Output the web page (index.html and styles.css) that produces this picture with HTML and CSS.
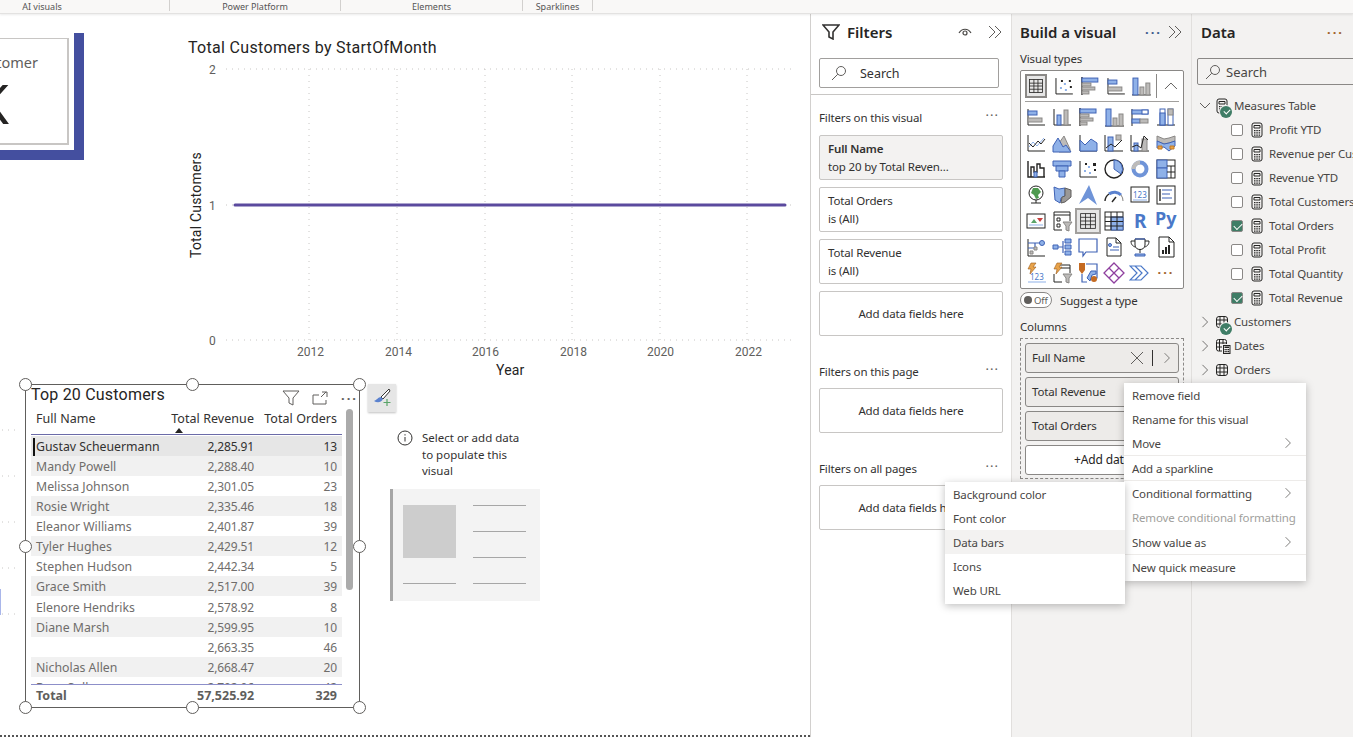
FILE: index.html
```html
<!DOCTYPE html>
<html lang="en">
  <head>
    <meta charset="UTF-8" />
    <title>Power BI Desktop - Report view</title>
    <link rel="stylesheet" href="styles.css">
  </head>
  <body>
    <svg class="defs" width="0" height="0">
      <symbol id="calc" viewBox="0 0 14 16">
        <rect class="k" x="2" y="1" width="10" height="14" rx="2"/>
        <path class="k" d="M4 3.5h6v2.5h-6z"/>
        <path class="dots" d="M4 8h1.500v1.300h-1.500zM6.300 8h1.500v1.300h-1.500zM8.600 8h1.500v1.300h-1.500zM4 10.200h1.500v1.300h-1.500zM6.300 10.200h1.500v1.300h-1.500zM8.600 10.200h1.500v1.300h-1.500zM4 12.400h1.500v1.300h-1.500zM6.300 12.400h1.500v1.300h-1.500zM8.600 12.400h1.500v1.300h-1.500z"/>
      </symbol>
      <symbol id="grid" viewBox="0 0 14 14">
        <rect class="k" x="1.500" y="1.500" width="11" height="11" rx="2.500"/>
        <path class="k" d="M5 1.500v11M9 1.500v11M1.500 5h11M1.500 9h11"/>
      </symbol>
      <symbol id="dates" viewBox="0 0 16 16">
        <path class="k" d="M7 13H3.500a2 2 0 0 1-2-2V3.500a2 2 0 0 1 2-2h6a2 2 0 0 1 2 2V6M4.500 1.500V13M8 1.500V6M1.500 5H11M1.500 9H7"/>
        <rect class="k" x="8.500" y="7.500" width="6.500" height="8"/>
        <path class="dots" d="M9.500 8.500h4.500v1.500H9.500zM9.500 11h1.300v1.300H9.500zM11.200 11h1.300v1.300h-1.300zM12.900 11h1.300v1.300h-1.300zM9.500 13h1.300v1.300H9.500zM11.200 13h1.300v1.300h-1.300zM12.900 13h1.300v1.300h-1.300z"/>
      </symbol>
      <symbol id="right" viewBox="0 0 10 14"><path class="thin" d="M2 1l6 6-6 6"/></symbol>
      <symbol id="double" viewBox="0 0 16 14"><path class="thin" d="M2 1l6 6-6 6M8 1l6 6-6 6"/></symbol>
      <symbol id="lens" viewBox="0 0 16 16"><circle class="thin" cx="10" cy="6" r="4.500"/><path class="thin" d="M6.800 9.200L1 15"/></symbol>
    </svg>

    <div class="ribbon">
      <div class="ribbon-group w1">AI visuals</div>
      <div class="ribbon-group w2">Power Platform</div>
      <div class="ribbon-group w3">Elements</div>
      <div class="ribbon-group w4">Sparklines</div>
    </div>

    <div class="app">
      <main class="canvas">
        <div class="kpi-shadow"></div>
        <div class="kpi-card">
          <div class="kpi-label">Total Customer</div>
          <div class="kpi-value">1K</div>
        </div>

        <svg class="line-chart" width="810" height="380" viewBox="0 14 810 380">
          <text class="chart-title" x="188" y="53">Total Customers by StartOfMonth</text>
          <path class="gridline" d="M226 69H795M226 205H795M226 340H795M309 69V340M397 69V340M485 69V340M572 69V340M660 69V340M747 69V340"/>
          <path class="series" d="M235 205H785"/>
          <text class="tick" x="209" y="74">2</text>
          <text class="tick" x="209" y="210">1</text>
          <text class="tick" x="209" y="345">0</text>
          <text class="tick" x="297" y="356">2012</text>
          <text class="tick" x="385" y="356">2014</text>
          <text class="tick" x="472" y="356">2016</text>
          <text class="tick" x="560" y="356">2018</text>
          <text class="tick" x="647" y="356">2020</text>
          <text class="tick" x="735" y="356">2022</text>
          <text class="axis-title" x="496" y="375">Year</text>
          <text class="axis-title" transform="translate(201 258) rotate(-90)">Total Customers</text>
        </svg>

        <svg class="left-peek" width="22" height="200" viewBox="0 0 22 200">
          <path class="gridline" d="M2 1H20M2 47H20M2 93H20M2 139H20M2 185H20"/>
          <path class="peek-bar" d="M.5 160V186"/>
        </svg>

        <section class="table-visual">
          <div class="table-title">Top 20 Customers</div>
          <div class="visual-tools">
            <svg width="18" height="16" viewBox="0 0 18 16"><path class="thin" d="M1 1h16l-6 7v7l-4-2V8z"/></svg>
            <svg width="16" height="14" viewBox="0 0 16 14"><path class="thin" d="M1 4V13H14V9M1 4h6M9 6l5-5M10 1h5v5"/></svg>
            <span class="more">···</span>
          </div>
          <div class="scrollbar"></div>
          <div class="table-head">
            <div class="cell">Full Name</div>
            <div class="cell num head-sorted">Total Revenue<span class="sort"></span></div>
            <div class="cell num">Total Orders</div>
          </div>
          <div class="table-body">
            <div class="row selected"><div class="cell">Gustav Scheuermann</div><div class="cell num">2,285.91</div><div class="cell num">13</div></div>
            <div class="row"><div class="cell">Mandy Powell</div><div class="cell num">2,288.40</div><div class="cell num">10</div></div>
            <div class="row"><div class="cell">Melissa Johnson</div><div class="cell num">2,301.05</div><div class="cell num">23</div></div>
            <div class="row"><div class="cell">Rosie Wright</div><div class="cell num">2,335.46</div><div class="cell num">18</div></div>
            <div class="row"><div class="cell">Eleanor Williams</div><div class="cell num">2,401.87</div><div class="cell num">39</div></div>
            <div class="row"><div class="cell">Tyler Hughes</div><div class="cell num">2,429.51</div><div class="cell num">12</div></div>
            <div class="row"><div class="cell">Stephen Hudson</div><div class="cell num">2,442.34</div><div class="cell num">5</div></div>
            <div class="row"><div class="cell">Grace Smith</div><div class="cell num">2,517.00</div><div class="cell num">39</div></div>
            <div class="row"><div class="cell">Elenore Hendriks</div><div class="cell num">2,578.92</div><div class="cell num">8</div></div>
            <div class="row"><div class="cell">Diane Marsh</div><div class="cell num">2,599.95</div><div class="cell num">10</div></div>
            <div class="row"><div class="cell"></div><div class="cell num">2,663.35</div><div class="cell num">46</div></div>
            <div class="row"><div class="cell">Nicholas Allen</div><div class="cell num">2,668.47</div><div class="cell num">20</div></div>
            <div class="row"><div class="cell">Ryan Sully</div><div class="cell num">2,702.06</div><div class="cell num">42</div></div>
          </div>
          <div class="table-total">
            <div class="cell">Total</div>
            <div class="cell num">57,525.92</div>
            <div class="cell num">329</div>
          </div>
          <span class="handle h-tl"></span><span class="handle h-tc"></span><span class="handle h-tr"></span>
          <span class="handle h-ml"></span><span class="handle h-mr"></span>
          <span class="handle h-bl"></span><span class="handle h-bc"></span><span class="handle h-br"></span>
        </section>

        <button class="format-btn" type="button">
          <svg width="20" height="20" viewBox="0 0 20 20">
            <path class="brush-tip" d="M17 1L9 9l2 2 7-8z"/>
            <path class="brush" d="M9 9c-3 0-4 3-7 4 3 2 7 2 9-2z"/>
            <path class="plus" d="M15 11v7M11.500 14.500h7"/>
          </svg>
        </button>

        <div class="placeholder">
          <div class="placeholder-msg">
            <svg class="info" width="16" height="16" viewBox="0 0 16 16">
              <circle cx="8" cy="8" r="7"/><path d="M8 7v4.500M8 4.200v1.300"/>
            </svg>
            <p>Select or add data to populate this visual</p>
          </div>
          <div class="placeholder-art">
            <div class="art-square"></div>
            <div class="art-line l1"></div>
            <div class="art-line l2"></div>
            <div class="art-line l3"></div>
            <div class="art-line l4"></div>
            <div class="art-line l5"></div>
          </div>
        </div>
      </main>

      <aside class="filters">
        <header class="pane-head">
          <svg class="funnel" width="18" height="16" viewBox="0 0 18 16"><path class="mid" d="M1 1h16l-6 7v7l-4-2V8z"/></svg>
          <h2>Filters</h2>
          <svg class="eye" width="16" height="12" viewBox="0 0 16 12"><path class="eye-line" d="M2 7c3-5 9-5 12 0"/><circle class="eye-line" cx="8" cy="7" r="2"/></svg>
          <svg class="collapse" width="16" height="14"><use href="#double"/></svg>
        </header>
        <div class="filter-search">
          <svg width="16" height="16"><use href="#lens"/></svg>
          <span>Search</span>
        </div>
        <div class="filter-sections">
          <div class="filter-title first">Filters on this visual<span class="more">···</span></div>
          <div class="filter-card active"><b>Full Name</b><span>top 20 by Total Reven...</span></div>
          <div class="filter-card"><span>Total Orders</span><span>is (All)</span></div>
          <div class="filter-card"><span>Total Revenue</span><span>is (All)</span></div>
          <div class="filter-card add">Add data fields here</div>
          <div class="filter-title page">Filters on this page<span class="more">···</span></div>
          <div class="filter-card add">Add data fields here</div>
          <div class="filter-title all">Filters on all pages<span class="more">···</span></div>
          <div class="filter-card add">Add data fields here</div>
        </div>
      </aside>

      <aside class="build">
        <header class="pane-head">
          <h2>Build a visual</h2>
          <span class="more blue">···</span>
          <svg class="collapse soft" width="16" height="14"><use href="#double"/></svg>
        </header>
        <div class="small-label types">Visual types</div>
        <div class="visual-types">
          <div class="vt-top">
            <svg class="vt picked" viewBox="0 0 22 22"><rect class="k" x="3" y="3" width="16" height="16"/><path class="k" d="M3 7.500h16M3 11h16M3 15h16M8.500 3v16M13.500 3v16"/></svg>
            <svg class="vt" viewBox="0 0 22 22"><path class="k" d="M3 3v16h17"/><path class="fb" d="M7 12h2v2H7zM11 8h2v2h-2zM12 14h2v2h-2z"/><path class="fk" d="M16 5h2v2h-2zM8 5h2v2H8zM17 11h2v2h-2z"/></svg>
            <svg class="vt" viewBox="0 0 22 22"><path class="ks" d="M3 2v18"/><rect class="b" x="3" y="3" width="16" height="4"/><rect class="g" x="3" y="8" width="9" height="3"/><rect class="g" x="3" y="12" width="13" height="3"/><rect class="g" x="3" y="16" width="7" height="3"/></svg>
            <svg class="vt" viewBox="0 0 22 22"><path class="k" d="M3 3v16h17"/><rect class="b" x="3" y="5" width="9" height="4"/><rect class="g" x="3" y="12" width="14" height="4"/></svg>
            <svg class="vt" viewBox="0 0 22 22"><path class="k" d="M2 20h19"/><rect class="b" x="3" y="3" width="5" height="17"/><rect class="g" x="10" y="12" width="4" height="8"/><rect class="g" x="16" y="8" width="4" height="12"/></svg>
            <span class="vt-divider"></span>
            <svg class="vt-up" width="16" height="10" viewBox="0 0 16 10"><path d="M2 8l6-6 6 6"/></svg>
          </div>
          <div class="vt-grid">
            <svg class="vt" viewBox="0 0 22 22"><path class="k" d="M3 3v16h17"/><rect class="b" x="3" y="5" width="9" height="4"/><rect class="g" x="3" y="12" width="14" height="4"/></svg>
            <svg class="vt" viewBox="0 0 22 22"><path class="k" d="M3 3v16h17"/><rect class="b" x="6" y="9" width="4" height="10"/><rect class="g" x="13" y="4" width="4" height="15"/></svg>
            <svg class="vt" viewBox="0 0 22 22"><path class="ks" d="M3 2v18"/><rect class="b" x="3" y="3" width="16" height="4"/><rect class="g" x="3" y="8" width="9" height="3"/><rect class="g" x="3" y="12" width="13" height="3"/><rect class="g" x="3" y="16" width="7" height="3"/></svg>
            <svg class="vt" viewBox="0 0 22 22"><path class="k" d="M2 20h19"/><rect class="b" x="3" y="3" width="5" height="17"/><rect class="g" x="10" y="12" width="4" height="8"/><rect class="g" x="16" y="8" width="4" height="12"/></svg>
            <svg class="vt" viewBox="0 0 22 22"><path class="k" d="M3 3v17"/><rect class="b" x="3" y="4" width="16" height="4"/><rect class="o" x="13" y="4" width="6" height="4"/><rect class="b" x="3" y="13" width="8" height="4"/><rect class="g" x="11" y="13" width="8" height="4"/></svg>
            <svg class="vt" viewBox="0 0 22 22"><path class="k" d="M2 19h18"/><rect class="o" x="5" y="3" width="5" height="16"/><rect class="b" x="5" y="7" width="5" height="12"/><rect class="o" x="13" y="3" width="5" height="16"/><rect class="g" x="13" y="3" width="5" height="6"/></svg>

            <svg class="vt" viewBox="0 0 22 22"><path class="k" d="M3 3v16h17"/><path class="ln" d="M4 15l4-5 4 4 7-8"/><path class="k" d="M4 11l4 4 5-6 3 3 4-5"/></svg>
            <svg class="vt" viewBox="0 0 22 22"><path class="g" d="M8 11l5-7 6 13v3H8z"/><path class="b" d="M2 20v-6l5-8 5 9 3-2 5 7z"/></svg>
            <svg class="vt" viewBox="0 0 22 22"><path class="k" d="M3 3v16h17"/><path class="b" d="M3 8l5 5 6-6 6 4v8H3z"/></svg>
            <svg class="vt" viewBox="0 0 22 22"><path class="k" d="M2 19h18M2 3v16"/><rect class="b" x="5" y="5" width="5" height="14"/><rect class="g" x="13" y="3" width="5" height="5"/><path class="k" d="M3 16l5-4 4 3 7-7"/></svg>
            <svg class="vt" viewBox="0 0 22 22"><path class="k" d="M2 19h18M2 3v16"/><rect class="b" x="5" y="11" width="4" height="8"/><rect class="g" x="13" y="7" width="5" height="12"/><path class="k" d="M3 15l5-2 4 3 3-12 4 4"/></svg>
            <svg class="vt" viewBox="0 0 22 22"><path class="g" d="M2 4l7 3 5-1 6-2v5l-6 2-5 1-7-3z"/><path class="b" d="M2 9l7 3 5-1 6-2v5l-6 5-5-4-7 1z"/><path class="or" d="M3 14h4v3H3zM15 14h4v3h-4z"/></svg>

            <svg class="vt" viewBox="0 0 22 22"><path class="ks" d="M3 3v16h17"/><path class="ks" d="M6 19V9h3v5h3V6h3v4h4v9"/><path class="b" d="M9 14h3v5H9z"/></svg>
            <svg class="vt" viewBox="0 0 22 22"><path class="b" d="M2 3h18v5H2z"/><path class="b" d="M5 8h12v5H5z"/><path class="b" d="M8 13h6v6H8z"/></svg>
            <svg class="vt" viewBox="0 0 22 22"><path class="k" d="M3 3v16h17"/><path class="fb" d="M7 12h2v2H7zM11 8h2v2h-2zM12 14h2v2h-2z"/><path class="fk" d="M16 5h3v3h-3zM8 5h2v2H8zM17 11h2v2h-2z"/></svg>
            <svg class="vt" viewBox="0 0 22 22"><circle class="ks" cx="11" cy="11" r="9"/><path class="b" d="M11 2a9 9 0 0 1 7 14l-7-5z"/></svg>
            <svg class="vt" viewBox="0 0 22 22"><circle class="ring" cx="11" cy="11" r="6.500"/><path class="ring-g" d="M4.500 11a6.500 6.500 0 0 1 6.500-6.500"/></svg>
            <svg class="vt" viewBox="0 0 22 22"><rect class="k" x="2" y="2" width="18" height="18"/><rect class="b" x="2" y="2" width="10" height="8"/><rect class="b" x="2" y="10" width="10" height="10"/><path class="k" d="M12 8h8M16 8v12M12 14h8"/></svg>

            <svg class="vt" viewBox="0 0 22 22"><circle class="k" cx="11" cy="9" r="7"/><path class="earth" d="M8 4l5 0 3 4-3 3 1 3-3 1-2-4-3-2z"/><path class="k" d="M6 19h10M11 16v3"/></svg>
            <svg class="vt" viewBox="0 0 22 22"><path class="b" d="M3 3l5 2 6-1v9l-4 1-1 5-5-3z"/><path class="dk" d="M14 4l6 2v7l-6 5-4 1 1-6 3-1z"/></svg>
            <svg class="vt" viewBox="0 0 22 22"><path class="azure" d="M12 1l8 20-9-7-9 6z"/></svg>
            <svg class="vt" viewBox="0 0 22 22"><path class="ks" d="M2 17a9 9 0 0 1 4-7"/><path class="gauge" d="M6 10a9 9 0 0 1 12 1"/><path class="g" d="M18 11a9 9 0 0 1 2 6"/><path class="ks" d="M9 18l4-5"/></svg>
            <svg class="vt" viewBox="0 0 22 22"><rect class="k" x="2" y="3" width="18" height="15"/><text class="vt-num" x="4" y="14">123</text><path class="ln" d="M4 16h14"/></svg>
            <svg class="vt" viewBox="0 0 22 22"><rect class="k" x="2" y="2" width="18" height="18"/><path class="ks" d="M5 5v12"/><path class="ln2" d="M7 6h10M7 10h8M7 14h10"/></svg>

            <svg class="vt" viewBox="0 0 22 22"><rect class="k" x="2" y="4" width="18" height="14"/><path class="up" d="M6 13l3-4 3 4z"/><path class="down" d="M12 8h6l-3 4z"/><path class="ln" d="M4 15h14"/></svg>
            <svg class="vt" viewBox="0 0 22 22"><path class="k" d="M19 11V2H3v18h8M3 5h16"/><path class="g" d="M12 12h9l-3 4v5l-3-1v-4z"/><path class="k" d="M6 8h3v3H6zM6 14h3v3H6z"/></svg>
            <svg class="vt framed" viewBox="0 0 22 22"><rect class="k" x="2" y="2" width="18" height="18"/><path class="k" d="M2 6.500h18M2 11h18M2 15.500h18M8 2v18M14 2v18"/></svg>
            <svg class="vt" viewBox="0 0 22 22"><rect class="k" x="2" y="2" width="18" height="18"/><path class="b" d="M8 7h12v13H8z"/><path class="k" d="M2 7h18M2 11.500h18M2 16h18M8 2v18M14 2v18"/></svg>
            <svg class="vt" viewBox="0 0 22 22"><text class="vt-r" x="5" y="18">R</text></svg>
            <svg class="vt" viewBox="0 0 22 22"><text class="vt-py" x="0" y="15">Py</text></svg>

            <svg class="vt" viewBox="0 0 22 22"><path class="k" d="M3 3v17h17"/><path class="ln2" d="M3 7h13M10 7v5H3"/><circle class="b" cx="17" cy="7" r="2.500"/><path class="g" d="M9 11h3v3H9zM5 15h3v3H5z"/></svg>
            <svg class="vt" viewBox="0 0 22 22"><path class="ln2" d="M7 11h5M12 5v12"/><path class="b" d="M2 9h5v4H2zM14 3h6v4h-6zM14 9h6v4h-6zM14 15h6v4h-6z"/></svg>
            <svg class="vt" viewBox="0 0 22 22"><path class="ln2" d="M2 3h18v13H9l-3 4v-4H2z"/></svg>
            <svg class="vt" viewBox="0 0 22 22"><path class="k" d="M4 2h9l5 5v13H4zM13 2v5h5"/><circle class="b" cx="7" cy="9" r="1.500"/><path class="ln2" d="M10 11h6M7 14h9"/></svg>
            <svg class="vt" viewBox="0 0 22 22"><path class="k" d="M6 3h10v6c0 6-10 6-10 0zM6 5H2c0 4 2 5 4 6M16 5h4c0 4-2 5-4 6M11 13v4"/><path class="b" d="M6 18h10v2H6z"/><path class="ln2" d="M6 3h10"/></svg>
            <svg class="vt" viewBox="0 0 22 22"><path class="k" d="M4 1h10l5 5v15H4zM14 1v5h5"/><path class="fk" d="M7 14h2v4H7zM10 11h2v7h-2zM13 9h2v9h-2z"/></svg>

            <svg class="vt" viewBox="0 0 22 22"><path class="bolt" d="M6 1h5L8 5h3L5 12l1-5H3z"/><text class="vt-num" x="5" y="18">123</text><path class="ln" d="M3 20h18"/></svg>
            <svg class="vt" viewBox="0 0 22 22"><path class="k" d="M19 11V3H9M3 12v8h8M9 6h10"/><path class="bolt" d="M6 1h5L8 5h3L5 12l1-5H3z"/><path class="g" d="M12 12h9l-3 4v5l-3-1v-4z"/></svg>
            <svg class="vt" viewBox="0 0 22 22"><path class="ln2" d="M9 2h11v14h-6M5 12v8h5"/><path class="orf" d="M2 1h6v7l-3 4-3-4z"/><path class="b" d="M10 16l4-7h5v3l-4 1-2 6z"/><circle class="orf" cx="17" cy="17" r="3"/></svg>
            <svg class="vt" viewBox="0 0 22 22"><path class="pa" d="M11 1l10 10-10 10L1 11zM6 6l10 10M16 6L6 16"/></svg>
            <svg class="vt" viewBox="0 0 22 22"><path class="auto" d="M1 4h11l7 7-7 7H1l7-7zM6 4l7 7-7 7"/></svg>
            <span class="vt-more">···</span>
          </div>
        </div>
        <div class="suggest">
          <span class="toggle"><i></i>Off</span>
          <span>Suggest a type</span>
        </div>
        <div class="small-label columns">Columns</div>
        <div class="well">
          <div class="chip"><span>Full Name</span>
            <svg class="chip-x" width="14" height="14" viewBox="0 0 14 14"><path class="thin" d="M1 1l12 12M13 1L1 13"/></svg>
            <i class="chip-sep"></i>
            <svg width="8" height="12"><use href="#right"/></svg>
          </div>
          <div class="chip"><span>Total Revenue</span></div>
          <div class="chip"><span>Total Orders</span></div>
          <div class="chip add">+Add data</div>
        </div>
      </aside>

      <aside class="data">
        <header class="pane-head"><h2>Data</h2><span class="more data-more">···</span></header>
        <div class="data-search">
          <svg width="16" height="16"><use href="#lens"/></svg><span>Search</span>
        </div>
        <ul class="tree">
          <li class="table-row">
            <svg class="twisty" width="12" height="8" viewBox="0 0 12 8"><path class="thin" d="M1 1l5 5 5-5"/></svg>
            <span class="table-icon"><svg width="14" height="16"><use href="#calc"/></svg><i class="badge"></i></span>Measures Table
          </li>
          <li class="field"><i class="check"></i><svg width="14" height="16"><use href="#calc"/></svg>Profit YTD</li>
          <li class="field"><i class="check"></i><svg width="14" height="16"><use href="#calc"/></svg>Revenue per Customer</li>
          <li class="field"><i class="check"></i><svg width="14" height="16"><use href="#calc"/></svg>Revenue YTD</li>
          <li class="field"><i class="check"></i><svg width="14" height="16"><use href="#calc"/></svg>Total Customers</li>
          <li class="field"><i class="check on"></i><svg width="14" height="16"><use href="#calc"/></svg>Total Orders</li>
          <li class="field"><i class="check"></i><svg width="14" height="16"><use href="#calc"/></svg>Total Profit</li>
          <li class="field"><i class="check"></i><svg width="14" height="16"><use href="#calc"/></svg>Total Quantity</li>
          <li class="field"><i class="check on"></i><svg width="14" height="16"><use href="#calc"/></svg>Total Revenue</li>
          <li class="table-row">
            <svg class="twisty side" width="8" height="12"><use href="#right"/></svg>
            <span class="table-icon"><svg width="14" height="14"><use href="#grid"/></svg><i class="badge"></i></span>Customers
          </li>
          <li class="table-row">
            <svg class="twisty side" width="8" height="12"><use href="#right"/></svg>
            <span class="table-icon"><svg width="16" height="16"><use href="#dates"/></svg></span>Dates
          </li>
          <li class="table-row">
            <svg class="twisty side" width="8" height="12"><use href="#right"/></svg>
            <span class="table-icon"><svg width="14" height="14"><use href="#grid"/></svg></span>Orders
          </li>
        </ul>
      </aside>

      <div class="menu field-menu">
        <div class="menu-item">Remove field</div>
        <div class="menu-item">Rename for this visual</div>
        <div class="menu-item sep">Move<svg width="8" height="12"><use href="#right"/></svg></div>
        <div class="menu-item sep">Add a sparkline</div>
        <div class="menu-item">Conditional formatting<svg width="8" height="12"><use href="#right"/></svg></div>
        <div class="menu-item off">Remove conditional formatting</div>
        <div class="menu-item sep">Show value as<svg width="8" height="12"><use href="#right"/></svg></div>
        <div class="menu-item">New quick measure</div>
      </div>

      <div class="menu format-menu">
        <div class="menu-item">Background color</div>
        <div class="menu-item">Font color</div>
        <div class="menu-item hover">Data bars</div>
        <div class="menu-item">Icons</div>
        <div class="menu-item">Web URL</div>
      </div>
    </div>
  </body>
</html>
```

FILE: styles.css
```css
* {
  box-sizing: border-box;
}
html,
body {
  margin: 0;
  height: 100%;
  overflow: hidden;
}
body {
  font-family: "Noto Sans", "Open Sans", sans-serif;
  font-size: 11.5px;
  letter-spacing: -0.15px;
  color: #323130;
  background: #fff;
}
h2 {
  margin: 0;
  font-size: 15px;
  font-weight: 600;
  letter-spacing: 0;
  color: #252423;
}
p {
  margin: 0;
}
ul {
  list-style: none;
  margin: 0;
  padding: 0;
}
.defs {
  position: absolute;
}

/* svg helpers */
.k,
.thin,
.mid,
.ks,
.ln,
.ln2,
.eye-line {
  fill: none;
}
.k,
.ks {
  stroke: #252423;
}
.k {
  stroke-width: 1;
}
.ks {
  stroke-width: 1.4;
}
.thin {
  stroke: #605e5c;
  stroke-width: 1;
}
.mid {
  stroke: #323130;
  stroke-width: 1.6;
}
.eye-line {
  stroke: #484644;
  stroke-width: 1.2;
}
.dots,
.fk {
  fill: #252423;
}
.fb {
  fill: #8fb1e8;
}
.b {
  fill: #8fb1e8;
  stroke: #3f62b5;
}
.g {
  fill: #bdbbb9;
  stroke: #8a8886;
}
.o {
  fill: #fff;
  stroke: #3f62b5;
}
.or {
  fill: #e8a34a;
  stroke: #c47a22;
}
.orf {
  fill: #c46a22;
}
.dk {
  fill: #9a9896;
  stroke: #605e5c;
}
.ln {
  stroke: #8fb1e8;
}
.ln2 {
  stroke: #3f62b5;
  stroke-width: 1.2;
}
.ring {
  fill: none;
  stroke: #6f94d8;
  stroke-width: 4;
}
.ring-g {
  fill: none;
  stroke: #bdbbb9;
  stroke-width: 4;
}
.earth {
  fill: #4f9a4f;
}
.azure {
  fill: #6f94d8;
}
.gauge {
  fill: none;
  stroke: #5b82cf;
  stroke-width: 3;
}
.up {
  fill: #5aa469;
}
.down {
  fill: #c8403f;
}
.bolt {
  fill: #e8a34a;
  stroke: #9a5b1a;
  stroke-width: 0.6;
}
.pa {
  fill: none;
  stroke: #8e3f9e;
  stroke-width: 1.3;
}
.auto {
  fill: none;
  stroke: #4a78c8;
  stroke-width: 1.2;
}
.vt-num {
  font-size: 8px;
  letter-spacing: 0;
  fill: #4a78c8;
}
.vt-r {
  font-size: 19px;
  font-weight: 700;
  letter-spacing: 0;
  fill: #4a78c8;
}
.vt-py {
  font-size: 18px;
  font-weight: 700;
  letter-spacing: 0;
  fill: #4a78c8;
}

/* ribbon */
.ribbon {
  display: flex;
  height: 14px;
  background: #f9f8f7;
  border-bottom: 1px solid #e3e2e1;
  box-shadow: 0 1px 2px rgba(0, 0, 0, 0.08);
  font-size: 9px;
  letter-spacing: 0;
  color: #555;
  position: relative;
  z-index: 2;
}
.ribbon-group {
  text-align: center;
  border-right: 1px solid #d2d0ce;
  height: 11px;
  line-height: 14px;
}
.w1 {
  width: 170px;
  padding-right: 85px;
}
.w2 {
  width: 171px;
}
.w3 {
  width: 182px;
}
.w4 {
  width: 70px;
}

/* layout */
.app {
  position: relative;
  display: flex;
  height: 723px;
}
.canvas {
  position: relative;
  width: 811px;
  height: 723px;
  border-right: 1px solid #d2d0ce;
  overflow: hidden;
}
.canvas::after {
  content: "";
  position: absolute;
  left: 0;
  right: 0;
  top: 721px;
  border-top: 2px dotted #555;
}
.filters {
  width: 201px;
  background: #fff;
  border-right: 1px solid #e1dfdd;
}
.build {
  width: 180px;
  background: #f3f2f1;
  border-right: 1px solid #e1dfdd;
  padding: 0 8px;
}
.data {
  flex: 1;
  background: #f3f2f1;
  overflow: hidden;
}
.pane-head {
  display: flex;
  align-items: center;
  height: 36px;
}
.more {
  color: #323130;
  font-size: 13px;
  font-weight: 700;
  letter-spacing: 2px;
  line-height: 1;
}
.collapse {
  flex: none;
}

/* canvas visuals */
.kpi-shadow {
  position: absolute;
  left: -20px;
  top: 19px;
  width: 104px;
  height: 127px;
  background: #444f9f;
}
.kpi-card {
  position: absolute;
  left: -70px;
  top: 24px;
  width: 139px;
  height: 107px;
  background: #fff;
  border: 1px solid #c8c6c4;
  border-width: 1px 2px 2px 1px;
  box-shadow: 0 0 0 5px #fff;
  overflow: hidden;
  text-align: right;
}
.kpi-label {
  margin-top: 13px;
  padding-right: 29px;
  font-size: 14.500px;
  letter-spacing: 0;
  color: #605e5c;
  white-space: nowrap;
}
.kpi-value {
  font-size: 54px;
  line-height: 62px;
  letter-spacing: 0;
  color: #252423;
  padding-right: 58px;
}
.line-chart {
  position: absolute;
  left: 0;
  top: 0;
}
.chart-title {
  font-family: Roboto, sans-serif;
  font-size: 16px;
  letter-spacing: 0.32px;
  fill: #252423;
}
.gridline {
  fill: none;
  stroke: #c8c6c4;
  stroke-dasharray: 1 5;
}
.series {
  stroke: #5b4a9e;
  stroke-width: 3;
  stroke-linecap: round;
}
.tick {
  font-family: Roboto, sans-serif;
  font-size: 12px;
  letter-spacing: 0;
  fill: #605e5c;
}
.axis-title {
  font-family: Roboto, sans-serif;
  font-size: 14px;
  letter-spacing: 0.2px;
  fill: #252423;
}
.left-peek {
  position: absolute;
  left: 0;
  top: 415px;
}
.peek-bar {
  stroke: #a9b6ea;
  stroke-width: 1;
}

/* table visual */
.table-visual {
  position: absolute;
  left: 25px;
  top: 370px;
  width: 335px;
  height: 324px;
  border: 1px solid #605e5c;
  padding: 0 17px 0 5px;
  background: #fff;
}
.table-title {
  font-family: Roboto, sans-serif;
  font-size: 16px;
  letter-spacing: 0.2px;
  line-height: 20px;
  color: #252423;
}
.visual-tools {
  position: absolute;
  top: 5px;
  left: 256px;
  display: flex;
  align-items: center;
  gap: 12px;
}
.visual-tools .more {
  margin-left: 1px;
  color: #605e5c;
}
.scrollbar {
  position: absolute;
  left: 320px;
  top: 24px;
  width: 7px;
  height: 181px;
  border-radius: 4px;
  background: #ababab;
}
.table-head,
.row,
.table-total {
  display: grid;
  grid-template-columns: 166px 62px 83px;
}
.cell {
  padding: 0 5px;
  white-space: nowrap;
}
.num {
  text-align: right;
  padding-left: 0;
}
.table-head {
  height: 29px;
  padding-top: 4px;
  border-bottom: 1px solid #6b6ba8;
  color: #323130;
  font-size: 12.500px;
  letter-spacing: 0.05px;
  line-height: 17px;
  margin-top: 1px;
}
.head-sorted {
  position: relative;
  overflow: visible;
  direction: rtl;
}
.sort {
  position: absolute;
  left: -22px;
  top: 18px;
  border: 4px solid transparent;
  border-top: 0;
  border-bottom: 5px solid #252423;
}
.table-body {
  height: 249px;
  overflow: hidden;
  border-bottom: 1px solid #8d8fc9;
  margin-top: 1px;
}
.row {
  height: 20px;
  line-height: 21px;
  color: #6f6d6b;
  font-size: 12.300px;
  letter-spacing: 0;
}
.row .num {
  font-size: 12px;
  letter-spacing: -0.15px;
}
.row:nth-child(even) {
  background: #f1f1f1;
}
.row:nth-child(9) {
  margin-top: 1px;
}
.row.selected {
  position: relative;
  background: #e6e6e6;
  color: #323130;
}
.row.selected::before {
  content: "";
  position: absolute;
  left: 2px;
  top: 2px;
  bottom: 0;
  width: 2px;
  background: #111;
}
.table-total {
  height: 22px;
  line-height: 22px;
  font-weight: 700;
  color: #605e5c;
  font-size: 12.500px;
  letter-spacing: 0;
}
.handle {
  position: absolute;
  width: 13px;
  height: 13px;
  border-radius: 50%;
  border: 1px solid #605e5c;
  background: #fff;
}
.h-tl,
.h-tc,
.h-tr {
  top: -7px;
}
.h-ml,
.h-mr {
  top: 155px;
}
.h-bl,
.h-bc,
.h-br {
  bottom: -7px;
}
.h-tl,
.h-ml,
.h-bl {
  left: -7px;
}
.h-tc,
.h-bc {
  left: 160px;
}
.h-tr,
.h-mr,
.h-br {
  right: -7px;
}
.format-btn {
  position: absolute;
  left: 368px;
  top: 370px;
  width: 28px;
  height: 28px;
  padding: 4px;
  border: 0;
  background: #e6e6e6;
  box-shadow: 0 1px 2px rgba(0, 0, 0, 0.25);
}
.brush-tip {
  fill: #fff;
  stroke: #323130;
}
.brush {
  fill: #5b82cf;
}
.plus {
  fill: none;
  stroke: #5aa469;
  stroke-width: 1.200;
}

/* empty placeholder */
.placeholder {
  position: absolute;
  left: 390px;
  top: 416px;
  width: 150px;
}
.placeholder-msg {
  display: flex;
  gap: 9px;
  padding-left: 7px;
  color: #323130;
  line-height: 16.500px;
  letter-spacing: 0;
}
.placeholder-msg p {
  width: 110px;
}
.info {
  flex: none;
  fill: none;
  stroke: #323130;
}
.placeholder-art {
  position: relative;
  height: 112px;
  margin-top: 9px;
  background: #f3f3f3;
  border-left: 3px solid #a6a6a6;
}
.art-square {
  position: absolute;
  left: 10px;
  top: 16px;
  width: 53px;
  height: 53px;
  background: #cdcdcd;
}
.art-line {
  position: absolute;
  width: 53px;
  height: 1px;
  background: #a6a6a6;
}
.l1 {
  left: 80px;
  top: 16px;
}
.l2 {
  left: 80px;
  top: 42px;
}
.l3 {
  left: 80px;
  top: 68px;
}
.l4 {
  left: 80px;
  top: 94px;
}
.l5 {
  left: 10px;
  top: 94px;
}

/* filters pane */
.filters .pane-head {
  padding: 0 8px 0 11px;
}
.filters h2 {
  margin-left: 7px;
  flex: 1;
}
.eye {
  margin-right: 14px;
}
.filter-search {
  display: flex;
  align-items: center;
  gap: 13px;
  width: 180px;
  height: 30px;
  margin: 8px 0 6px 8px;
  padding-left: 11px;
  background: #fff;
  border: 1px solid #a19f9d;
  border-radius: 2px;
  font-size: 12.500px;
  letter-spacing: 0;
}
.filter-sections {
  border-top: 1px solid #c8c6c4;
  padding: 0 8px;
}
.filter-title {
  display: flex;
  justify-content: space-between;
  color: #323130;
  height: 17px;
  line-height: 17px;
}
.filter-title .more {
  margin-right: 4px;
  font-weight: 400;
  letter-spacing: 1px;
  color: #605e5c;
}
.first {
  margin-top: 14px;
  margin-bottom: 9px;
}
.page {
  margin-top: 27px;
  margin-bottom: 8px;
}
.all {
  margin-top: 27px;
  margin-bottom: 8px;
}
.filter-card {
  display: flex;
  flex-direction: column;
  justify-content: center;
  width: 184px;
  height: 45px;
  margin-bottom: 7px;
  padding: 0 8px;
  border: 1px solid #c8c6c4;
  border-radius: 2px;
  line-height: 18px;
  color: #323130;
  background: #fff;
}
.filter-card b {
  font-weight: 600;
}
.filter-card.active {
  background: #f3f2f1;
}
.filter-card.add {
  align-items: center;
  padding-top: 1px;
}

/* build pane */
.build .pane-head {
  padding-right: 0;
}
.build h2 {
  flex: 1;
}
.more.blue {
  color: #3a5a8c;
  margin-right: 5px;
}
.small-label {
  color: #323130;
  height: 17px;
  line-height: 17px;
}
.visual-types {
  width: 164px;
  height: 219px;
  margin-top: 3px;
  background: #fff;
  border: 1px solid #8a8886;
  border-radius: 2px;
  padding: 0 2px;
}
.vt {
  display: block;
  width: 22px;
  height: 22px;
  margin: 2px;
}
.vt.framed {
  width: 26px;
  height: 26px;
  margin: 0;
  padding: 2px;
  background: #e6e6e6;
  border: 2px solid #a19f9d;
}
.vt-top {
  display: flex;
  align-items: center;
  height: 31px;
  margin: 0 2px;
  border-bottom: 1px solid #a19f9d;
  gap: 0;
}
.vt-top .vt {
  margin: 0 2px;
}
.vt-top .vt.picked {
  width: 22px;
  height: 24px;
  background: #e6e6e6;
  border: 2px solid #8a8886;
  margin-left: 0;
  margin-right: 4px;
}
.vt-divider {
  width: 1px;
  height: 24px;
  background: #8a8886;
  margin-left: 2px;
}
.vt-up {
  margin-left: 6px;
}
.vt-up path {
  fill: none;
  stroke: #605e5c;
}
.vt-grid {
  display: grid;
  grid-template-columns: repeat(6, 26px);
  grid-auto-rows: 26px;
  margin-top: 2px;
}
.vt-more {
  text-align: center;
  font-size: 13px;
  font-weight: 700;
  letter-spacing: 2px;
  line-height: 24px;
  color: #a0622a;
}
.suggest {
  display: flex;
  align-items: center;
  gap: 8px;
  height: 16px;
  margin-top: 3px;
  color: #323130;
}
.toggle {
  display: flex;
  align-items: center;
  gap: 2px;
  width: 32px;
  height: 16px;
  padding-left: 3px;
  border: 1px solid #8a8886;
  border-radius: 8px;
  font-size: 9.500px;
  background: #fff;
  color: #605e5c;
}
.toggle i {
  width: 8px;
  height: 8px;
  border-radius: 50%;
  background: #605e5c;
}
.columns {
  margin-top: 10px;
}
.well {
  display: flex;
  flex-direction: column;
  gap: 4px;
  width: 164px;
  height: 141px;
  margin-top: 3px;
  padding: 4px;
  border: 1px dashed #8a8886;
}
.chip {
  display: flex;
  align-items: center;
  height: 30px;
  flex: none;
  padding: 0 7px 1px 6px;
  background: #edebe9;
  border: 1px solid #8a8886;
  border-radius: 3px;
  color: #323130;
}
.chip span {
  flex: 1;
}
.chip-x {
  margin-right: 8px;
}
.chip-sep {
  width: 1px;
  height: 16px;
  background: #323130;
  margin-right: 10px;
}
.chip.add {
  background: #fff;
  color: #252423;
  padding-left: 48px;
  font-size: 12px;
}

/* data pane */
.data .pane-head {
  padding: 0 9px;
}
.data h2 {
  flex: 1;
}
.data-more {
  color: #a0622a;
}
.data-search {
  display: flex;
  align-items: center;
  gap: 5px;
  width: 170px;
  height: 27px;
  margin: 8px 0 9px 5px;
  padding-left: 7px;
  background: #f3f2f1;
  border: 1px solid #8a8886;
  border-radius: 2px;
  font-size: 13px;
  letter-spacing: 0;
  color: #484644;
}
.tree {
  width: 161px;
  white-space: nowrap;
  color: #484644;
}
.tree li {
  display: flex;
  align-items: center;
  height: 24px;
  padding-bottom: 1px;
}
.twisty {
  flex: none;
  width: 12px;
  margin-left: 7px;
}
.table-icon {
  position: relative;
  display: flex;
  flex: none;
  width: 19px;
  margin-left: 4px;
}
.badge {
  position: absolute;
  left: 5px;
  top: 8px;
  width: 12px;
  height: 12px;
  border-radius: 50%;
  background: #3f7d66;
  box-shadow: 0 0 0 1px #f3f2f1;
}
.badge::after {
  content: "";
  position: absolute;
  left: 3.500px;
  top: 3px;
  width: 5px;
  height: 3px;
  border-left: 1px solid #fff;
  border-bottom: 1px solid #fff;
  transform: rotate(-45deg);
}
.field {
  padding-left: 39px;
  gap: 5px;
}
.field svg {
  flex: none;
  margin-left: 1px;
}
.check {
  flex: none;
  position: relative;
  width: 12px;
  height: 12px;
  margin-right: 1px;
  background: #fff;
  border: 1px solid #8a8886;
  border-radius: 2px;
}
.check.on {
  background: #3f7d66;
}
.check.on::after {
  content: "";
  position: absolute;
  left: 2px;
  top: 2px;
  width: 7px;
  height: 4px;
  border-left: 1.500px solid #fff;
  border-bottom: 1.500px solid #fff;
  transform: rotate(-45deg);
}

/* context menus */
.menu {
  position: absolute;
  background: #fff;
  box-shadow: 0 2px 8px rgba(0, 0, 0, 0.25);
  color: #484644;
  z-index: 5;
}
.field-menu {
  left: 1124px;
  top: 369px;
  width: 182px;
  height: 198px;
}
.format-menu {
  left: 945px;
  top: 468px;
  width: 180px;
  height: 122px;
  z-index: 6;
}
.menu-item {
  display: flex;
  align-items: center;
  justify-content: space-between;
  height: 24px;
  padding: 0 14px 0 8px;
  white-space: nowrap;
}
.field-menu .sep {
  height: 25px;
  border-bottom: 1px solid #edebe9;
}
.menu-item.off {
  height: 25px;
  color: #a19f9d;
}
.menu-item.hover {
  background: #f3f2f1;
}
```
